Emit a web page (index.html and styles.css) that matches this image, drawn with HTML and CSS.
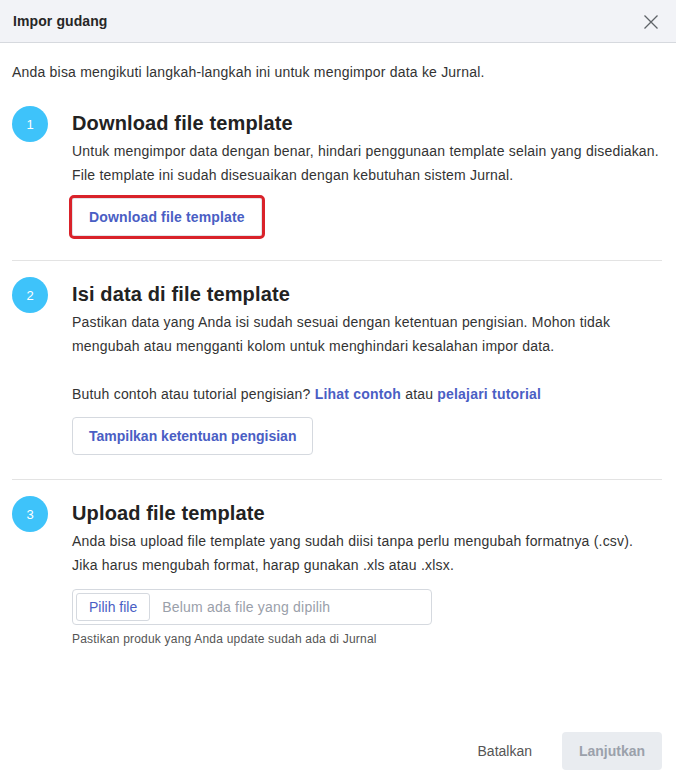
FILE: index.html
```html
<!DOCTYPE html>
<html lang="id">
<head>
<meta charset="utf-8">
<title>Impor gudang</title>
<link rel="stylesheet" href="styles.css">
</head>
<body>
<div class="modal">
  <header class="modal-header">
    <h1 class="modal-title">Impor gudang</h1>
    <button class="close-btn" aria-label="Tutup">
      <svg width="16" height="16" viewBox="0 0 16 16"><path d="M1.5 1.5 L14.5 14.5 M14.5 1.5 L1.5 14.5" stroke="#5f6368" stroke-width="1.3" fill="none"/></svg>
    </button>
  </header>
  <main class="modal-body">
    <p class="intro">Anda bisa mengikuti langkah-langkah ini untuk mengimpor data ke Jurnal.</p>

    <section class="step">
      <div class="step-num">1</div>
      <div class="step-content">
        <h2 class="step-title">Download file template</h2>
        <p class="step-text">Untuk mengimpor data dengan benar, hindari penggunaan template selain yang disediakan.<br>File template ini sudah disesuaikan dengan kebutuhan sistem Jurnal.</p>
        <button class="btn-outline highlighted">Download file template</button>
      </div>
    </section>

    <section class="step">
      <div class="step-num">2</div>
      <div class="step-content">
        <h2 class="step-title">Isi data di file template</h2>
        <p class="step-text">Pastikan data yang Anda isi sudah sesuai dengan ketentuan pengisian. Mohon tidak<br>mengubah atau mengganti kolom untuk menghindari kesalahan impor data.</p>
        <p class="step-text spaced">Butuh contoh atau tutorial pengisian? <a class="link" href="#">Lihat contoh</a> atau <a class="link" href="#">pelajari tutorial</a></p>
        <button class="btn-outline">Tampilkan ketentuan pengisian</button>
      </div>
    </section>

    <section class="step last">
      <div class="step-num">3</div>
      <div class="step-content">
        <h2 class="step-title">Upload file template</h2>
        <p class="step-text">Anda bisa upload file template yang sudah diisi tanpa perlu mengubah formatnya (.csv).<br>Jika harus mengubah format, harap gunakan .xls atau .xlsx.</p>
        <div class="file-input">
          <span class="file-btn">Pilih file</span>
          <span class="file-placeholder">Belum ada file yang dipilih</span>
        </div>
        <p class="hint">Pastikan produk yang Anda update sudah ada di Jurnal</p>
      </div>
    </section>
  </main>
  <footer class="modal-footer">
    <button class="btn-text">Batalkan</button>
    <button class="btn-disabled">Lanjutkan</button>
  </footer>
</div>
</body>
</html>
```

FILE: styles.css
```css
* { box-sizing: border-box; }
html, body { margin: 0; padding: 0; }
body {
  font-family: "Liberation Sans", Arial, sans-serif;
  color: #2b2b2b;
  background: #ffffff;
}
.modal {
  width: 676px;
  height: 784px;
  display: flex;
  flex-direction: column;
}
.modal-header {
  height: 43px;
  background: #f2f3f7;
  border-bottom: 1px solid #d6d9de;
  display: flex;
  align-items: center;
  justify-content: space-between;
  padding: 0 17px 0 13px;
}
.modal-title {
  margin: 0;
  font-size: 14px;
  font-weight: bold;
  color: #262626;
  letter-spacing: 0.1px;
}
.close-btn {
  border: 0;
  background: none;
  padding: 0;
  width: 16px;
  height: 16px;
  display: flex;
  margin-top: 2px;
}
.modal-body {
  flex: 1;
  padding: 19px 14px 0 12px;
}
.intro {
  margin: 0 0 8px;
  font-size: 14px;
  line-height: 20px;
  color: #333;
  letter-spacing: 0.2px;
}
.step {
  display: grid;
  grid-template-columns: 36px 1fr;
  column-gap: 24px;
  padding: 17px 0 24px;
  border-bottom: 1px solid #e3e3e3;
}
.step.last { border-bottom: 0; }
.step-num {
  width: 36px;
  height: 36px;
  border-radius: 50%;
  background: #3ec3fa;
  color: #fff;
  font-size: 13px;
  display: flex;
  align-items: center;
  justify-content: center;
  margin-top: -1px;
}
.step-title {
  margin: 0;
  font-size: 20px;
  line-height: 32px;
  font-weight: bold;
  color: #222;
  letter-spacing: 0.14px;
}
.step-text {
  margin: 0;
  font-size: 14px;
  line-height: 24px;
  color: #333;
  letter-spacing: 0.2px;
}
.step-text.spaced { margin-top: 24px; }
.link {
  color: #4a5ec4;
  font-weight: bold;
  text-decoration: none;
}
.btn-outline {
  display: block;
  margin-top: 11px;
  height: 38px;
  padding: 0 16px;
  background: #fff;
  border: 1px solid #d5d9df;
  border-radius: 4px;
  font-family: inherit;
  font-size: 14px;
  font-weight: bold;
  color: #4a5ec4;
}
.btn-outline.highlighted {
  letter-spacing: 0.15px;
  border-color: #e2e4e8;
  outline: 3px solid #d9222a;
  outline-offset: 0;
  border-radius: 2px;
}
.file-input {
  margin-top: 12px;
  width: 360px;
  height: 36px;
  border: 1px solid #d5d9df;
  border-radius: 4px;
  display: flex;
  align-items: center;
  padding: 0 3px;
}
.file-btn {
  height: 28px;
  padding: 0 12px;
  border: 1px solid #d5d9df;
  border-radius: 3px;
  display: flex;
  align-items: center;
  font-size: 14px;
  color: #4a5ec4;
}
.file-placeholder {
  margin-left: 12px;
  font-size: 14px;
  color: #9aa0aa;
  letter-spacing: 0.2px;
}
.hint {
  margin: 6px 0 0;
  font-size: 12px;
  line-height: 16px;
  color: #555;
  letter-spacing: 0.2px;
}
.modal-footer {
  display: flex;
  justify-content: flex-end;
  align-items: center;
  gap: 16px;
  padding: 0 14px 14px;
}
.btn-text {
  border: 0;
  background: none;
  font-family: inherit;
  font-size: 14px;
  color: #555;
  padding: 0 14px;
  height: 38px;
}
.btn-disabled {
  width: 100px;
  height: 38px;
  border: 0;
  border-radius: 4px;
  background: #e9ecf0;
  font-family: inherit;
  font-size: 14px;
  font-weight: bold;
  color: #9ba1ab;
}
```
